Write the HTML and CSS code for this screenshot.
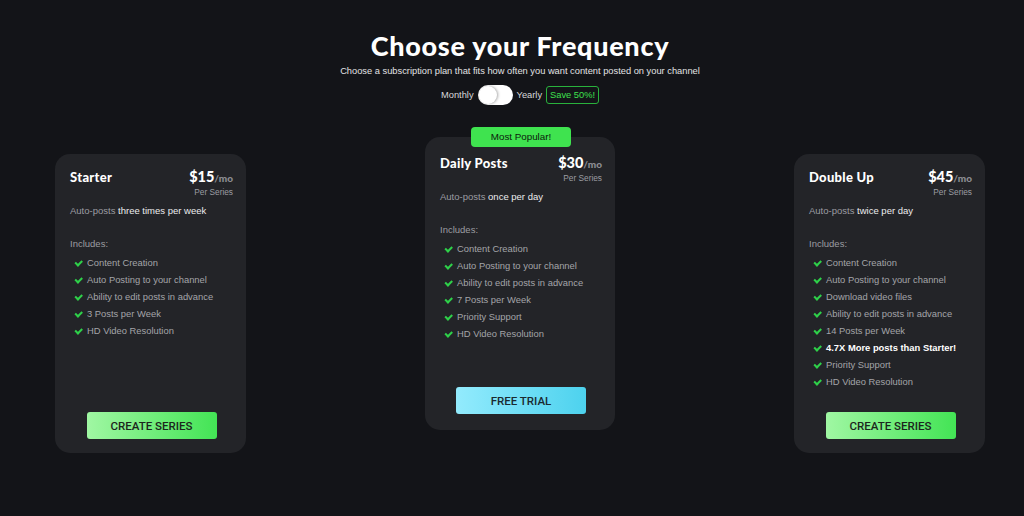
FILE: index.html
```html
<!DOCTYPE html>
<html lang="en">
<head>
    <meta charset="UTF-8">
    <meta name="viewport" content="width=device-width, initial-scale=1.0">
    <title>Choose your Frequency</title>
    <link rel="stylesheet" href="styles.css">
</head>
<body>
    <main class="pricing">
        <header class="pricing-head">
            <h1>Choose your Frequency</h1>
            <p class="subtitle">Choose a subscription plan that fits how often you want content posted on your channel</p>
            <div class="billing">
                <span>Monthly</span>
                <span class="switch"><span class="knob"></span></span>
                <span>Yearly</span>
                <span class="save">Save 50%!</span>
            </div>
        </header>

        <section class="plans">
            <div class="plan">
                <div class="plan-top">
                    <h2>Starter</h2>
                    <div class="price">
                        <div><strong>$15</strong>/mo</div>
                        <small>Per Series</small>
                    </div>
                </div>
                <p class="freq">Auto-posts <b>three times per week</b></p>
                <p class="includes">Includes:</p>
                <ul>
                    <li>Content Creation</li>
                    <li>Auto Posting to your channel</li>
                    <li>Ability to edit posts in advance</li>
                    <li>3 Posts per Week</li>
                    <li>HD Video Resolution</li>
                </ul>
                <button class="btn btn-green">CREATE SERIES</button>
            </div>

            <div class="plan plan-featured">
                <span class="badge">Most Popular!</span>
                <div class="plan-top">
                    <h2>Daily Posts</h2>
                    <div class="price">
                        <div><strong>$30</strong>/mo</div>
                        <small>Per Series</small>
                    </div>
                </div>
                <p class="freq">Auto-posts <b>once per day</b></p>
                <p class="includes">Includes:</p>
                <ul>
                    <li>Content Creation</li>
                    <li>Auto Posting to your channel</li>
                    <li>Ability to edit posts in advance</li>
                    <li>7 Posts per Week</li>
                    <li>Priority Support</li>
                    <li>HD Video Resolution</li>
                </ul>
                <button class="btn btn-blue">FREE TRIAL</button>
            </div>

            <div class="plan">
                <div class="plan-top">
                    <h2>Double Up</h2>
                    <div class="price">
                        <div><strong>$45</strong>/mo</div>
                        <small>Per Series</small>
                    </div>
                </div>
                <p class="freq">Auto-posts <b>twice per day</b></p>
                <p class="includes">Includes:</p>
                <ul>
                    <li>Content Creation</li>
                    <li>Auto Posting to your channel</li>
                    <li>Download video files</li>
                    <li>Ability to edit posts in advance</li>
                    <li>14 Posts per Week</li>
                    <li class="highlight">4.7X More posts than Starter!</li>
                    <li>Priority Support</li>
                    <li>HD Video Resolution</li>
                </ul>
                <button class="btn btn-green">CREATE SERIES</button>
            </div>
        </section>
    </main>
</body>
</html>
```

FILE: styles.css
```css
body {
    font-family: 'Liberation Sans', Arial, sans-serif;
    background: #131418;
    color: #e8e8ea;
    margin: 0;
    min-height: 100vh;
    overflow: hidden;
}

.pricing {
    padding: 30px 0 0 16px;
    display: flex;
    flex-direction: column;
    align-items: center;
}

.pricing-head {
    text-align: center;
}

.pricing-head h1 {
    font-family: Lato, 'DejaVu Sans', sans-serif;
    font-weight: 900;
    font-size: 27px;
    letter-spacing: 0.7px;
    color: #ffffff;
    margin: 0;
    line-height: 32px;
}

.subtitle {
    margin: 4px 0 0;
    font-size: 9.3px;
    color: #e2e2e4;
}

.billing {
    margin-top: 9px;
    display: flex;
    align-items: center;
    justify-content: center;
    gap: 3px;
    font-size: 9.3px;
    color: #d8d8da;
}

.switch {
    width: 35px;
    height: 20px;
    background: #ffffff;
    border-radius: 10px;
    position: relative;
    margin: 0 1px;
}

.knob {
    position: absolute;
    left: 1px;
    top: 1px;
    width: 18px;
    height: 18px;
    border-radius: 50%;
    background: #ffffff;
    box-shadow: 1px 0 3px rgba(0, 0, 0, 0.35);
}

.save {
    margin-left: 1px;
    border: 1px solid #29b23c;
    border-radius: 3px;
    color: #3ee04e;
    padding: 3px 3px;
    line-height: 10px;
}

.plans {
    margin-top: 32px;
    display: flex;
    align-items: flex-start;
    gap: 179px;
}

.plan {
    position: relative;
    box-sizing: border-box;
    width: 191px;
    height: 299px;
    margin-top: 17px;
    background: #232428;
    border-radius: 15px;
    padding: 14px 13px 14px 15px;
    display: flex;
    flex-direction: column;
}

.plan-featured {
    width: 190px;
    height: 293px;
    margin-top: 0;
    padding-top: 17px;
    padding-bottom: 16px;
}

.badge {
    position: absolute;
    top: -10px;
    left: 46px;
    width: 100px;
    height: 20px;
    line-height: 20px;
    text-align: center;
    background: #3fe34f;
    color: #0c1a0c;
    font-size: 9.8px;
    border-radius: 4px;
}

.plan-top {
    display: flex;
    justify-content: space-between;
    align-items: flex-start;
}

.plan-top h2 {
    margin: 0;
    font-family: Lato, 'DejaVu Sans', sans-serif;
    font-size: 13px;
    font-weight: 900;
    letter-spacing: 0.3px;
    color: #ffffff;
    line-height: 18px;
}

.price {
    text-align: right;
    font-family: Lato, 'DejaVu Sans', sans-serif;
    font-size: 10px;
    font-weight: 900;
    color: #8c8d92;
    line-height: 18px;
}

.price strong {
    font-size: 14.5px;
    color: #ffffff;
}

.price small {
    display: block;
    font-family: 'Liberation Sans', Arial, sans-serif;
    font-weight: normal;
    font-size: 8.3px;
    line-height: 10px;
    color: #9c9da2;
}

.freq {
    margin: 8px 0 0;
    font-size: 9.5px;
    color: #9c9da2;
}

.freq b {
    font-weight: normal;
    color: #ececee;
}

.includes {
    margin: 22px 0 0;
    font-size: 9.5px;
    color: #9c9da2;
}

ul {
    list-style: none;
    margin: 5px 0 0;
    padding: 0;
}

li {
    font-size: 9.4px;
    color: #a3a4a9;
    line-height: 17px;
    padding-left: 17px;
    position: relative;
}

li::before {
    content: "";
    position: absolute;
    left: 5px;
    top: 6px;
    width: 5px;
    height: 2.5px;
    border-left: 2px solid #2fd14a;
    border-bottom: 2px solid #2fd14a;
    transform: rotate(-45deg);
}

li.highlight {
    color: #ffffff;
    font-weight: bold;
}

.btn {
    margin: auto auto 0;
    width: 130px;
    height: 27px;
    border: none;
    border-radius: 3px;
    font-family: Roboto, 'Liberation Sans', sans-serif;
    font-size: 11.5px;
    font-weight: 500;
    color: #1c261d;
    cursor: pointer;
}

.btn-green {
    background: linear-gradient(to right, #a0f7a3, #43e455);
}

.btn-blue {
    background: linear-gradient(to right, #93ebfd, #4dd2ee);
    color: #1a2a30;
}
```
